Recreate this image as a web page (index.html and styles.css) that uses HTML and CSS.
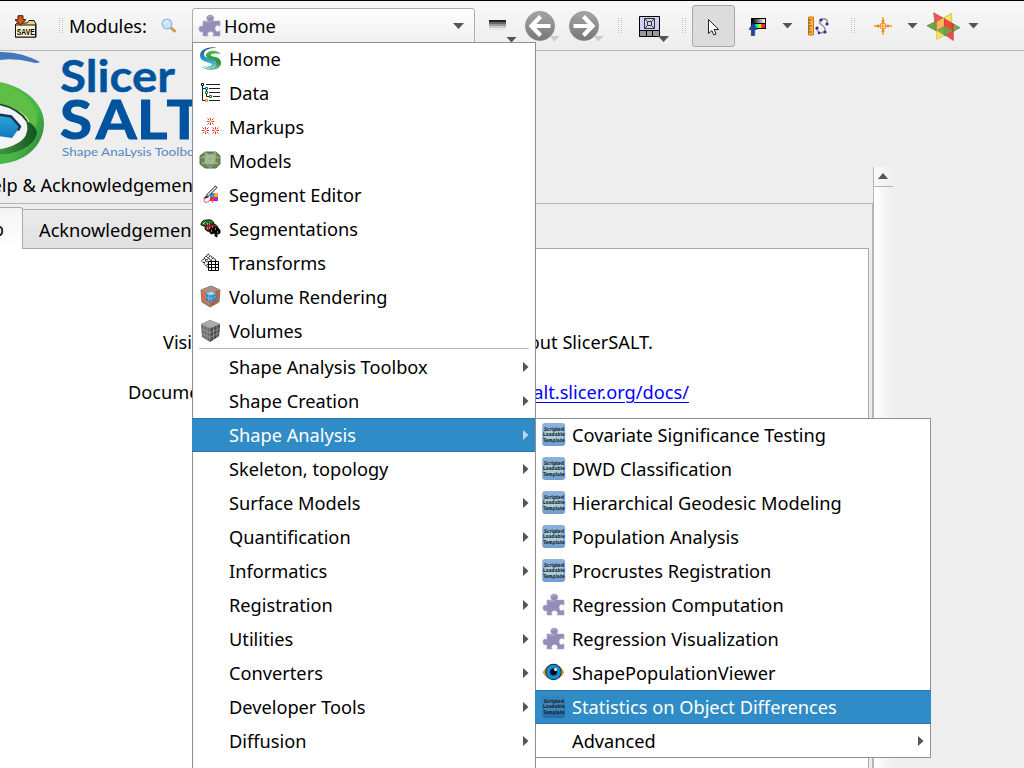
FILE: index.html
```html
<!DOCTYPE html>
<html lang="en">
<head>
<meta charset="utf-8">
<title>SlicerSALT</title>
<link rel="stylesheet" href="styles.css">
<script src="icons.js" defer></script>
</head>
<body>
<header class="toolbar">
  <svg class="tb-save" data-icon="save" width="24" height="24" viewBox="0 0 24 24"></svg>
  <i class="grip grip-modules"></i>
  <span class="modules-label">Modules:</span>
  <svg class="tb-search" data-icon="search" width="16" height="16" viewBox="0 0 16 16"></svg>
  <div class="combo"><svg data-icon="puzzle" width="24" height="24" viewBox="0 0 24 24"></svg><span>Home</span><i class="down"></i></div>
  <div class="history"><svg data-icon="history" width="22" height="26" viewBox="0 0 22 26"></svg><i class="down corner"></i></div>
  <div class="nav"><svg data-icon="back" width="30" height="32" viewBox="0 0 30 32"></svg><i class="down corner faded"></i></div>
  <div class="nav"><svg data-icon="forward" width="30" height="32" viewBox="0 0 30 32"></svg><i class="down corner faded"></i></div>
  <i class="grip grip-layout"></i>
  <div class="layout"><svg data-icon="layout" width="21" height="21" viewBox="0 0 21 21"></svg><i class="down corner"></i></div>
  <i class="grip grip-mouse"></i>
  <div class="pointer"><svg data-icon="pointer" width="14" height="20" viewBox="0 0 14 20"></svg></div>
  <svg class="tb-window" data-icon="window" width="20" height="20" viewBox="0 0 20 20"></svg>
  <i class="down d1"></i>
  <svg class="tb-ruler" data-icon="ruler" width="22" height="20" viewBox="0 0 22 20"></svg>
  <i class="grip grip-view"></i>
  <svg class="tb-cross" data-icon="cross" width="20" height="20" viewBox="0 0 20 20"></svg>
  <i class="down d2"></i>
  <svg class="tb-slices" data-icon="slices" width="35" height="30" viewBox="0 0 35 30"></svg>
  <i class="down d3"></i>
</header>
<main class="workspace">
  <section class="panel">
    <svg class="logo" data-icon="logo" width="240" height="113" viewBox="0 0 240 113"></svg>
    <h2 class="section-title">Help &amp; Acknowledgement</h2>
    <div class="tabframe">
      <div class="tabs"><div class="tab active"><span>Help</span></div><div class="tab">Acknowledgement</div></div>
      <div class="page">
        <p class="line visit"><span>Visit</span><span>about SlicerSALT.</span></p>
        <p class="line docs"><span>Documentation:</span><a>https://salt.slicer.org/docs/</a></p>
      </div>
    </div>
  </section>
  <div class="scrollbar"><i class="up"></i></div>
</main>
<nav class="menu main-menu">
  <div class="item"><svg data-icon="home"></svg>Home</div>
  <div class="item"><svg data-icon="data"></svg>Data</div>
  <div class="item"><svg data-icon="markups"></svg>Markups</div>
  <div class="item"><svg data-icon="models"></svg>Models</div>
  <div class="item"><svg data-icon="editor"></svg>Segment Editor</div>
  <div class="item"><svg data-icon="segs"></svg>Segmentations</div>
  <div class="item"><svg data-icon="transforms"></svg>Transforms</div>
  <div class="item"><svg data-icon="rendering"></svg>Volume Rendering</div>
  <div class="item"><svg data-icon="volumes"></svg>Volumes</div>
  <hr>
  <div class="item sub">Shape Analysis Toolbox</div>
  <div class="item sub">Shape Creation</div>
  <div class="item sub selected">Shape Analysis</div>
  <div class="item sub">Skeleton, topology</div>
  <div class="item sub">Surface Models</div>
  <div class="item sub">Quantification</div>
  <div class="item sub">Informatics</div>
  <div class="item sub">Registration</div>
  <div class="item sub">Utilities</div>
  <div class="item sub">Converters</div>
  <div class="item sub">Developer Tools</div>
  <div class="item sub">Diffusion</div>
</nav>
<nav class="menu sub-menu">
  <div class="item"><svg data-icon="scripted"></svg>Covariate Significance Testing</div>
  <div class="item"><svg data-icon="scripted"></svg>DWD Classification</div>
  <div class="item"><svg data-icon="scripted"></svg>Hierarchical Geodesic Modeling</div>
  <div class="item"><svg data-icon="scripted"></svg>Population Analysis</div>
  <div class="item"><svg data-icon="scripted"></svg>Procrustes Registration</div>
  <div class="item"><svg data-icon="puzzle"></svg>Regression Computation</div>
  <div class="item"><svg data-icon="puzzle"></svg>Regression Visualization</div>
  <div class="item"><svg data-icon="eye"></svg>ShapePopulationViewer</div>
  <div class="item selected"><svg data-icon="scriptedSelected"></svg>Statistics on Object Differences</div>
  <div class="item sub">Advanced</div>
</nav>
</body>
</html>
```

FILE: styles.css
```css
* { box-sizing: border-box; }
body {
  margin: 0;
  width: 1024px;
  height: 768px;
  overflow: hidden;
  position: relative;
  display: flex;
  flex-direction: column;
  background: #eee;
  color: #000;
  font: 18.22px/34px "Noto Sans", sans-serif;
}
svg { display: block; flex: none; }

/* Toolbar */
.toolbar {
  flex: none;
  height: 51px;
  display: flex;
  align-items: center;
  border-top: 1px solid #000;
  border-bottom: 1px solid #b8b8b8;
  background: linear-gradient(#f8f8f8, #ededed);
}
.grip {
  flex: none;
  width: 5px;
  height: 17px;
  background: repeating-linear-gradient(#f3f3f3 0 1px, transparent 1px 2px),
    linear-gradient(90deg, #c0c0c0 1px, transparent 1px 3px, #c0c0c0 3px 4px, transparent 4px);
}
.tb-save { margin: 2px 0 0 14px; }
.grip-modules { margin-left: 21px; }
.modules-label { margin-left: 5px; width: 79px; letter-spacing: -0.1px; }
.tb-search { margin-left: 13px; }
.combo {
  width: 283px;
  height: 36px;
  margin: 1px 0 0 15px;
  padding: 0 10px 0 5px;
  display: flex;
  align-items: center;
  border: 1px solid #adadad;
  border-radius: 3px;
  background: linear-gradient(#fefefe, #f0f0f0);
}
.combo span { margin-left: 2px; flex: 1; }
.down {
  flex: none;
  width: 11px;
  height: 6px;
  background: #555;
  clip-path: polygon(0 0, 100% 0, 50% 100%);
}
.down.faded { background: #ccc; }
.history, .nav, .layout { flex: none; position: relative; }
.corner { position: absolute; right: -6px; bottom: -4px; }
.history { margin-left: 13px; }
.history .corner { right: -7px; bottom: -4px; }
.nav { margin-left: 15px; }
.nav + .nav { margin-left: 14px; }
.nav .corner { right: -5px; bottom: 0; }
.grip-layout { margin-left: 19px; }
.layout { margin: 2px 0 0 16px; }
.layout .corner { right: -9px; bottom: -5px; }
.grip-mouse { margin-left: 22px; }
.pointer {
  flex: none;
  width: 43px;
  height: 42px;
  margin-left: 5px;
  padding: 12px 0 0 14px;
  border: 1px solid #a8a8a8;
  border-radius: 3px;
  background: #dcdcdc;
}
.tb-window { margin-left: 13px; }
.d1 { margin-left: 14px; }
.tb-ruler { margin-left: 14px; }
.grip-view { margin-left: 22px; }
.tb-cross { margin-left: 17px; }
.d2 { margin-left: 14px; }
.tb-slices { margin-left: 8px; }
.d3 { margin-left: 7px; }

/* Module panel */
.workspace { flex: 1; display: flex; min-height: 0; }
.panel { width: 873px; flex: none; display: flex; flex-direction: column; }
.section-title {
  height: 39px;
  margin: 0 0 0 -22px;
  padding-top: 4px;
  font-weight: 400;
  font-size: inherit;
  white-space: nowrap;
}
.tabframe {
  flex: 1;
  padding: 4px 3px 0 0;
  display: flex;
  flex-direction: column;
  border-top: 1px solid #b5b5b5;
  border-right: 1px solid #b5b5b5;
}
.tabs { display: flex; align-items: flex-end; height: 41px; margin-bottom: -1px; }
.tab {
  height: 40px;
  width: 200px;
  padding: 3px 0 0 16px;
  border: 1px solid #aaa;
  border-left: 0;
  background: linear-gradient(#ebebeb, #e1e1e1);
}
.tab.active {
  width: 23px;
  height: 42px;
  padding: 4px 18px 0 0;
  display: flex;
  justify-content: flex-end;
  border-bottom: 0;
  border-right: 1px solid #aaa;
  border-top-right-radius: 3px;
  background: linear-gradient(#f4f4f4, #fff);
  z-index: 1;
}
.page {
  flex: 1;
  padding-top: 76px;
  border: 1px solid #a8a8a8;
  border-left: 0;
  border-bottom: 0;
  background: #fff;
}
.line { margin: 0 0 16px; display: flex; justify-content: space-between; }
.visit { width: 490px; margin-left: 163px; }
.docs { width: 561px; margin-left: 128px; }
.line a { color: #00f; text-decoration: underline; text-decoration-thickness: 1px; text-underline-offset: 3px; }
.scrollbar {
  width: 20px;
  margin-top: 116px;
  border-left: 1px solid #b5b5b5;
  background: linear-gradient(90deg, #fff, #eee);
}
.up {
  display: block;
  height: 20px;
  border-bottom: 1px solid #b5b5b5;
  background: linear-gradient(90deg, #fafafa, #efefef);
}
.up::before {
  content: "";
  display: block;
  width: 10px;
  height: 6px;
  margin-left: 4px;
  background: #555;
  clip-path: polygon(50% 0, 100% 100%, 0 100%);
  transform: translateY(6px);
}

/* Popup menus */
.menu { position: absolute; background: #fff; box-shadow: inset 0 0 0 1px #909090; }
.main-menu { left: 192px; top: 42px; width: 344px; height: 740px; }
.sub-menu { left: 535px; top: 418px; width: 396px; height: 340px; }
.item { height: 34px; display: flex; align-items: center; padding-left: 7px; white-space: nowrap; }
.item svg { width: 24px; height: 24px; margin-right: 6px; }
.item.sub { padding: 0 7.5px 0 37px; justify-content: space-between; }
.item.sub::after {
  content: "";
  width: 6px;
  height: 11px;
  background: #555;
  clip-path: polygon(0 0, 100% 50%, 0 100%);
}
.item.selected { background: #308cc6; color: #fff; box-shadow: inset 0 1px #2777aa, inset 0 -1px #2777aa; }
.main-menu .selected { width: 343px; padding-right: 6.5px; }
.item.sub.selected::after { background: #b9d9ec; }
.menu hr { height: 1px; margin: 0 7px 1px; border: 0; background: #bbb; }
```

FILE: icons.js
```js
const star = (x, y) =>
  `<path transform="translate(${x} ${y})" d="M0-3.5V-1M0 1V3.5M-3.5 0H-1M1 0H3.5M-3-3l1.7 1.7M3-3L1.3-1.3M-3 3l1.7-1.7M3 3L1.3 1.3"/>`;

const scripted = (id, top, bottom, opacity) =>
  `<defs><linearGradient id="${id}" x2="0" y2="1"><stop stop-color="${top}"/><stop offset="1" stop-color="${bottom}"/></linearGradient></defs>
  <rect x=".2" y="0" width="23" height="23" rx="3" fill="url(#${id})"/>
  <path d="M2 9l6-3 5 3 8-2v9l-7 3-6-3-6 2z" fill="#c3ddd8" opacity="${opacity}"/>
  <g font-family="DejaVu Sans" font-weight="700" font-size="5.2" fill="#12242c" text-anchor="middle"><text x="12" y="7.8" textLength="20" lengthAdjust="spacingAndGlyphs">Scripted</text><text x="12" y="13.3" textLength="22" lengthAdjust="spacingAndGlyphs">Loadable</text><text x="12" y="18.6" textLength="21.5" lengthAdjust="spacingAndGlyphs">Template</text></g>`;

const cube = (top, left, right, line) =>
  `<path d="M2 5L11 1l10 4-1 12-9 6-8-5z" fill="${left}"/><path d="M2 5l9-4 10 4-10 4z" fill="${top}"/><path d="M11 9l10-4-1 12-9 6z" fill="${right}"/>
  <path d="M2 5l9 4 10-4M11 9v14M5 3.6l9.500 4M8 2.300l10 4M5 6.300v13M8 7.600V21M14.500 7.600V21M18 6.300V18M2.300 9.500l8.700 4.300 9.600-4.300M2.700 14l8.300 4.500 9-4.700M17.500 3.600L8 7.600M14.300 2.300L5 6.300" fill="none" stroke="${line}" stroke-width=".6"/>`;

const round = path =>
  `<defs><linearGradient id="disc" y2="1" x2="0"><stop stop-color="#a5a5a5"/><stop offset="1" stop-color="#777"/></linearGradient></defs>
  <circle cx="15" cy="16" r="14.6" fill="url(#disc)" stroke="#888" stroke-width=".7"/><path d="${path}" fill="none" stroke="#fff" stroke-width="4.2"/>`;

const icons = {
  save: `<path d="M1.5 22V9.5L3 8h10l2-2.5h5L22 9v13z" fill="#e8cf82" stroke="#111"/><rect x="1.5" y="10" width="20" height="12" fill="#fff3cf" stroke="#111"/>
    <path d="M4 .7h5v4h3L6.500 10 1 4.700h3z" fill="#d95818" stroke="#40180a"/><text x="2.8" y="19.7" font-family="Liberation Sans" font-weight="700" font-size="9" textLength="18" lengthAdjust="spacingAndGlyphs">SAVE</text>`,
  search: `<path d="M9 9l4.500 4" stroke="#d4934e" stroke-width="3" stroke-linecap="round"/><circle cx="6" cy="6" r="4.8" fill="#c8e3fa" stroke="#9bbbe5" stroke-width="1.4"/><path d="M3 6q1-3 4-3" stroke="#fff" fill="none"/>`,
  history: `<path d="M1 7h17v2H1z" fill="#222"/><path d="M1 9h17v2H1z" fill="#666"/><path d="M1 11h17v2H1z" fill="#999"/><path d="M1 13h17v2H1z" fill="#ccc"/><path d="M1 15h17v2H1z" fill="#e8e8e8"/>`,
  back: round('M25.500 16H7M15.500 6.500L6.500 16l9 9.500'),
  forward: round('M4.500 16H23M14.500 6.500L23.500 16l-9 9.500'),
  layout: `<path d="M.5.500h20v20H.5z" fill="#d0d0f4" stroke="#000"/><path d="M.5 14.500h20v6H.5z" fill="#999" stroke="#000"/><path d="M7.500 15v5M13.500 15v5" stroke="#000"/><path d="M5.500 2.500h10v10h-10zM8.500 5.500h4v4h-4zM5.500 2.500l3 3M15.500 2.500l-3 3M5.500 12.500l3-3M15.500 12.500l-3-3" fill="none" stroke="#333"/>`,
  pointer: `<path d="M1.500 1.500v14l3.300-3 2 4.500 2.300-1-2-4.500h4.500z" fill="#fff" stroke="#222"/>`,
  window: `<defs><linearGradient id="grey"><stop stop-color="#000"/><stop offset="1" stop-color="#fff"/></linearGradient><linearGradient id="hue"><stop stop-color="#00f"/><stop offset=".15" stop-color="#0cf"/><stop offset=".35" stop-color="#0f6"/><stop offset=".55" stop-color="#fe0"/><stop offset=".75" stop-color="#f20"/><stop offset="1" stop-color="#f0c"/></linearGradient></defs>
    <path d="M3 2h15v11H3z"/><path d="M4 3h13v4H4z" fill="url(#grey)"/><path d="M6 8h11v4H6z" fill="url(#hue)"/><path d="M5 7l4 6.500H6.700v6H3.300v-6H1z" fill="#24449b" stroke="#17356f" stroke-width=".6"/>`,
  ruler: `<path d="M1.500 1h5v18h-5z" fill="#fbb040" stroke="#c3771b"/><path d="M1.500 4h3M1.500 7h2M1.500 10h3M1.500 13h2M1.500 16h3" stroke="#74450d"/><path d="M20 9Q22 2 15 3q-5 3 0 6 5 4 2 7-5 3-8-4" fill="none" stroke="#999" stroke-width="1.600"/><g fill="#2928a5"><circle cx="14" cy="4" r="1.6"/><circle cx="20" cy="8" r="1.6"/><circle cx="10" cy="12" r="1.6"/><circle cx="18" cy="16" r="1.6"/><circle cx="12" cy="17" r="1.3"/></g>`,
  cross: `<path d="M10 1v18M1 10h18" stroke="#fa9714" stroke-width="1.400"/><circle cx="10" cy="10" r="3" fill="#eee" stroke="#e9860d"/><path d="M10 5v10M5 10h10" stroke="#fa9714"/><path d="M8.500 5h3M8.500 15h3M5 8.500v3M15 8.500v3" stroke="#c76b00"/>`,
  slices: `<g stroke-width=".7"><path d="M1 14.700L17 7l17 9.700L19 25z" fill="#74b054" stroke="#4b8535"/>
    <path d="M25.700 2.300L10.700 10.700v17.600l15-7.600z" fill="#f9df62" stroke="#d0a21c" opacity=".9"/>
    <path d="M7.700 1.700L18 7.500v15.200L9.500 18z" fill="#ea3f3f" stroke="#c8282c" opacity=".85"/>
    <path d="M18 7.500L27.300 13v16.500L18 23z" fill="#ec2f36" stroke="#c8282c" opacity=".85"/>
    <path d="M10.700 10.700L18 6.600v8.700l-7.300 4z" fill="#f8d95c" opacity=".75"/>
    <path d="M10.700 19.500l7.300-3v8l-7.300 3.800z" fill="#f9df62" opacity=".9"/>
    <path d="M1 14.700l9-4.300v8.800zM10.700 19.500l7.800-4.300 8.500 4.800-8 5z" fill="#65a649" opacity=".9"/></g>`,
  puzzle: `<path d="M5 7h5.300Q8.500 5.500 8.700 3.800 9 1 12.200 1t3.600 2.800q.2 1.700-1.500 3.200H22v5.200q-1.800-1.300-3.300-.7-1.700.8-1.700 3t1.700 3q1.500.5 3.300-.8V22h-7q1-1.300.5-2.700-.7-1.800-2.900-1.800t-3 1.800q-.5 1.400.6 2.700H5v-4.300q-4 1-4-2.800t4-2.500z" fill="#928eb8" stroke="#a9a6c9" stroke-width=".6"/><path d="M6 8h7M10 3.500q1.500-2 3.500-.8" stroke="#c2bfdb" fill="none" opacity=".7"/>`,
  home: `<defs><linearGradient id="blueS" x2="0" y2="1"><stop stop-color="#1c4f92"/><stop offset=".5" stop-color="#2291c8"/><stop offset="1" stop-color="#6fcdd0"/></linearGradient><linearGradient id="greenS" x2="0" y2="1"><stop stop-color="#57b947"/><stop offset=".6" stop-color="#2c8c3e"/><stop offset="1" stop-color="#7cc58a"/></linearGradient></defs>
    <path d="M18 .5C8-1 1 3 1 8.500 1 13 5 14.500 9 15.500c4 1 5 2 2 3.500q-4 1.500-8-.5 7 4.500 12 1.500c4-3 2-7-3-8-4-1-7-2-7-5 0-4 5-6 13-6.500" fill="url(#blueS)"/><path d="M22 7C17 2 8 3 7 8c0 3 3 4 6 4.500 6 1.500 5 6.500 1 8.500-4 1-8 .5-12-1.500C8 25 22 24 22 16c0-5-4-6-8-6.500C10 8.500 11 5 22 7" fill="url(#greenS)"/>`,
  data: `<path d="M3.500 4v15.500H7M3.500 7.500H7M7.500 9v6.500H11M7 3.500h14M10 7.500h11M10 11.500h11M14 15.500h7M10 19.500h11" fill="none" stroke="#222"/><g fill="#fff" stroke-width="1"><path d="M2.500 2.500h2v2h-2z" stroke="#000"/><path d="M6.500 6.500h2v2h-2z" stroke="#06c"/><path d="M6.500 10.500h2v2h-2zM10.500 14.500h2v2h-2z" stroke="#080"/><path d="M6.500 18.500h2v2h-2z" stroke="#f70"/></g>`,
  markups: `<g stroke="#df391c" stroke-width="1">${star(11.5, 6.5)}${star(6.5, 15.5)}${star(16.5, 15.5)}</g>`,
  models: `<path d="M6 3h11l4 4v8l-4 4H6l-5-4V7z" fill="#6b865a" stroke="#55704a" stroke-linejoin="round"/><path d="M6 3l5 3 6-3-1 10-5 6-5-6zM1 9l6-2 4 5 4-5 6 2M2 15l4-2 5 6 5-6 4 2" fill="#8faa7b" stroke="#a9bd98" stroke-width=".5"/><path d="M7 6h8l1 7-5 3-5-3z" fill="#b5c4a2" opacity=".6"/>`,
  editor: `<g><path d="M11 10h4v4h-4z" fill="#1597ee"/><path d="M15 10h4v4h-4z" fill="#ffae19"/><path d="M11 14h4v4h-4z" fill="#ee3030"/><path d="M15 14h4v4h-4z" fill="#af22e2"/></g><path d="M17.500 3.500L8 13" stroke="#222" stroke-width="3"/><path d="M17 4L8 13" stroke="#fff" stroke-width="1.4"/><path d="M4 15.500l4-3.500 2 2-3 1.500z" fill="#333"/><path d="M6 16q-2 3 1 3.500 3 0 4-3M13 18l1 2" fill="none" stroke="#e44e54"/>`,
  segs: `<g stroke="#111"><path d="M2 8q0-5 6-5 5-1 7 3l-2 4H7l-2-1z" fill="#247a25"/><path d="M6 12q0-6 7-5 6 0 6 5l-5 3-6-1z" fill="#9e1c24"/><path d="M10 14q1-5 6-4 6 1 5 6l-2 1-1-1v4l-2-1v-3l-4 1z" fill="#000"/></g><path d="M4 7l2-2m2 2h3m-3 4h3m2-1h2m-3 4h2m2-2h2m0 3h2" stroke="#fff" stroke-width="1" stroke-dasharray="1 1"/>`,
  transforms: `<path d="M9 3l8 6-8 8-6-7zM7 5l8 7M5 7l7 8M11 5l-6 7M14 7l-7 8" fill="#fff" stroke="#000" stroke-width="1.2" stroke-dasharray="1 1"/><path d="M9.500 10.500h10v9h-10zM12.500 10.500v9M16.500 10.500v9M9.500 13.500h10M9.500 16.500h10" fill="#fff" stroke="#000"/>`,
  rendering: `<path d="M2 5l10-4 9 4-1 12-9 5-8-5z" fill="#c9754f" stroke="#85736a"/><path d="M2 5l9 4 10-4-9-4z" fill="#a98f7e"/><path d="M11 9l9-4-1 12-8 5z" fill="#a26551"/><path d="M7 8.500l5-2 5 2v6l-5 3-5-2z" fill="#3a85c4"/><path d="M7 8.500l5 2 5-2-5-2z" fill="#a8d2e9"/><path d="M12 11v6M9.500 10v6M7 12l5 2 5-3" stroke="#a4cdee" stroke-width=".6" fill="none"/>`,
  volumes: cube('#a5a5a5', '#686868', '#4b4b4b', '#b0b0b0'),
  scripted: scripted('scriptedFill', '#8eb3da', '#739fcf', '.65'),
  scriptedSelected: scripted('scriptedOn', '#3b86be', '#246cab', '.15'),
  eye: `<g transform="translate(-.5 .5)"><path d="M1 11q4-8 11-8t11 8q-4 7-11 7T1 11z" fill="#f1a22e"/><circle cx="12" cy="10.5" r="8.3" fill="#0b2f4b"/><circle cx="12" cy="10.5" r="7.3" fill="#198bd1"/><circle cx="12" cy="10.5" r="3.5" fill="#051019"/><circle cx="14" cy="8" r="1.5" fill="#fff"/></g>`,
  logo: `<defs><linearGradient id="ring" x1="0" x2="1" y2="1"><stop stop-color="#4ab74b"/><stop offset=".6" stop-color="#49b648"/><stop offset="1" stop-color="#1f7a30"/></linearGradient><linearGradient id="ringDark" x2="1" y2="0"><stop stop-color="#3f9a3e"/><stop offset="1" stop-color="#14511f"/></linearGradient><linearGradient id="gem" x2="0" y2="1"><stop stop-color="#2aa6da"/><stop offset="1" stop-color="#1577bd"/></linearGradient></defs>
    <path d="M-1 1Q20 0 40 11 37 13 31 11 16 7-1 9z" fill="#4378ba"/>
    <path d="M-1 31C20 34 44 50 44 72c0 25-22 40-45 41V98q17 3 27-7c7-8 6-16 1-25Q17 55-1 52z" fill="url(#ring)"/>
    <path d="M-1 31C17 36 34 48 37 64q1 10-3 15Q29 60-1 52z" fill="#62c044" opacity=".85"/>
    <path d="M25 69Q36 74 37 82 34 96 12 102 2 104-1 103V98Q20 95 26 84z" fill="url(#ringDark)"/>
    <path d="M-1 52Q17 57 26 70q4 12-4 18-10 9-23 10z" fill="#f2f5f4"/>
    <path d="M-1 53Q18 57 27 70" fill="none" stroke="#174f26" stroke-width="2"/>
    <path d="M-1 64l12 2 9 10-8 11-13-2z" fill="url(#gem)"/><path d="M-1 63.500l12 2 9 10-2 4" fill="none" stroke="#183360" stroke-width="2.500"/>
    <g fill="#00539e" stroke="#00539e" font-family="Lato" font-weight="700"><text x="60" y="40.5" font-size="43.5" stroke-width=".4" textLength="115" lengthAdjust="spacingAndGlyphs">Slicer</text><text transform="scale(1.1 1)" x="54.5 87.3 124.5 151.5" y="88" font-size="53" stroke-width="1.2">SALT</text></g>
    <text x="62" y="105" font-family="Lato" font-size="11.8" textLength="139" lengthAdjust="spacingAndGlyphs" fill="#5686c2">Shape AnaLysis Toolbox</text>`
};

for (const svg of document.querySelectorAll('svg[data-icon]')) {
  if (!svg.hasAttribute('viewBox')) svg.setAttribute('viewBox', '0 0 24 24');
  svg.innerHTML = icons[svg.dataset.icon];
}
```
